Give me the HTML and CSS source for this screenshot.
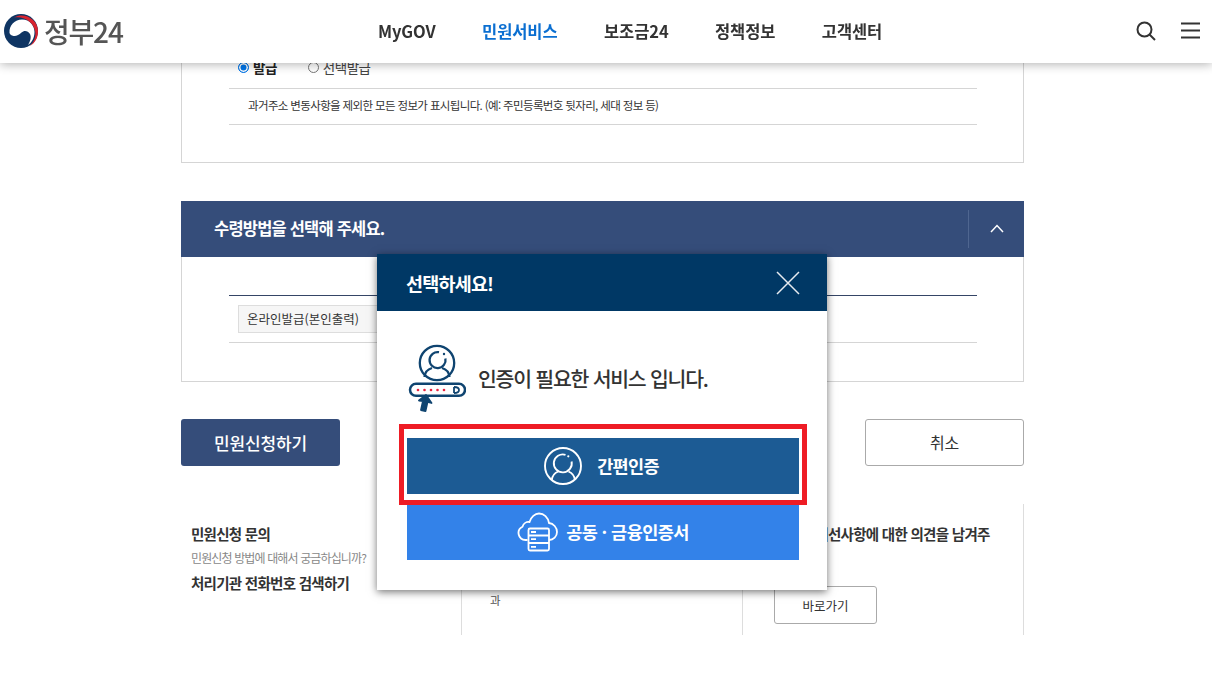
FILE: index.html
```html
<!DOCTYPE html>
<html lang="ko">
<head>
<meta charset="utf-8">
<title>정부24</title>
<link rel="stylesheet" href="styles.css">
</head>
<body>
<header class="site-header">
  <a class="logo">
    <svg class="logo-mark" width="36" height="36" viewBox="0 0 36 36">
      <circle cx="18" cy="18" r="17" fill="#0f3563"/>
      <path d="M6.500 20C6 12 12 6.500 19 6.500C27 6.500 31.500 13 31.500 19C31.500 25 28.500 30 25 32C27.500 28 28.500 24 27 21C25 17.500 21 17 18.500 19.500C16 22 13 23.500 10.500 23C8.500 22.500 7 21.500 6.500 20Z" fill="#fff"/>
      <path d="M11 4.500C20 -1 35 5 35 18.500C35 25 32 30 27 33C31 29 33 24 32.300 19C31.500 10 21.500 2.500 11 4.500Z" fill="#d8232f"/>
    </svg>
    <span class="logo-text">정부24</span>
  </a>
  <nav class="main-nav">
    <a>MyGOV</a>
    <a class="is-active">민원서비스</a>
    <a>보조금24</a>
    <a>정책정보</a>
    <a>고객센터</a>
  </nav>
  <div class="header-tools">
    <svg width="20" height="20" viewBox="0 0 20 20" fill="none" stroke="#333" stroke-width="2">
      <circle cx="8.500" cy="8.500" r="7"/>
      <path d="M13.500 13.500l5.500 5.500"/>
    </svg>
    <svg width="19" height="17" viewBox="0 0 19 17" fill="none" stroke="#333" stroke-width="2">
      <path d="M0 1.500h19M0 8.500h19M0 15.500h19"/>
    </svg>
  </div>
</header>

<main class="page">
  <section class="panel panel-top">
    <div class="inner">
      <div class="radio-row">
        <label class="radio-item is-on"><span class="radio"></span>발급</label>
        <label class="radio-item"><span class="radio"></span>선택발급</label>
      </div>
      <p class="note">과거주소 변동사항을 제외한 모든 정보가 표시됩니다. (예: 주민등록번호 뒷자리, 세대 정보 등)</p>
    </div>
  </section>

  <section class="accordion">
    <div class="accordion-head">
      <h2>수령방법을 선택해 주세요.</h2>
      <span class="accordion-toggle">
        <svg width="14" height="9" viewBox="0 0 14 9" fill="none" stroke="#fff" stroke-width="1.500"><path d="M1 8l6-6.500L13 8"/></svg>
      </span>
    </div>
    <div class="panel panel-body">
      <div class="inner">
        <div class="method-row">
          <span class="method-label">온라인발급(본인출력)</span>
        </div>
      </div>
    </div>
  </section>

  <div class="actions">
    <a class="btn btn-primary">민원신청하기</a>
    <a class="btn btn-outline">취소</a>
  </div>

  <section class="info">
    <div class="info-col">
      <h3>민원신청 문의</h3>
      <p class="info-sub">민원신청 방법에 대해서 궁금하십니까?</p>
      <h3 class="info-link">처리기관 전화번호 검색하기</h3>
    </div>
    <div class="info-col info-middle">
      <span class="info-small">과</span>
    </div>
    <div class="info-col info-right">
      <h3>서비스 개선사항에 대한 의견을 남겨주세요.</h3>
      <a class="btn-small">바로가기</a>
    </div>
  </section>
</main>

<div class="modal" role="dialog">
  <div class="modal-head">
    <h2>선택하세요!</h2>
    <svg class="modal-close" width="24" height="24" viewBox="0 0 24 24" fill="none" stroke="#e6ebf0" stroke-width="1.500"><path d="M1 1l22 22M23 1L1 23"/></svg>
  </div>
  <div class="modal-body">
    <div class="modal-msg">
      <svg width="58" height="68" viewBox="0 0 58 68" fill="none" stroke="#0f4470" stroke-width="2.300">
        <circle cx="29" cy="19" r="17.200"/>
        <path d="M31 8.200A8 8 0 1 0 37.400 14.500"/>
        <path d="M16.500 33c.5-5 4-8 7.500-9M41.500 33c-.5-5-4-8-7.500-9"/>
        <circle cx="36" cy="10" r="1.200" fill="#0f4470" stroke="none"/>
        <rect x="2" y="39.800" width="55" height="12" rx="6" stroke-width="2.500"/>
        <path d="M46 43v6M46 43c3.500 0 5 1.500 5 3s-1.500 3-5 3" stroke-width="1.800"/>
        <g fill="#e8233f" stroke="none">
          <circle cx="10" cy="46" r="1.300"/><circle cx="16.500" cy="46" r="1.300"/><circle cx="23" cy="46" r="1.300"/><circle cx="29.500" cy="46" r="1.300"/><circle cx="36" cy="46" r="1.300"/>
        </g>
        <path d="M18 51l-7 5.500 4 .5-2 9 4.500 1 2-9 4 1z" fill="#0f4470" stroke-width="1.800" stroke-linejoin="round"/>
      </svg>
      <p>인증이 필요한 서비스 입니다.</p>
    </div>
    <div class="modal-options">
      <a class="opt opt-simple">
        <svg width="38" height="38" viewBox="0 0 38 38" fill="none" stroke="#fff" stroke-width="1.900">
          <circle cx="19" cy="19" r="18"/>
          <path d="M21.500 7.800A9 9 0 1 0 27.600 14.500"/>
          <path d="M7.700 33c.5-4 3-7 6.500-8.500M31 33c-.5-4-3-7-6.500-8.500"/>
          <circle cx="24.300" cy="9.300" r="1.100" fill="#fff" stroke="none"/>
        </svg>
        <span>간편인증</span>
      </a>
      <a class="opt opt-cert">
        <svg width="42" height="40" viewBox="0 0 42 40" fill="none" stroke="#fff" stroke-width="1.800">
          <path d="M10.500 28H8.500a7 7 0 0 1-3-13.300C6.500 11.500 9.500 9.500 12.500 10 14 5 18 1.500 22 1.500c5 0 9 4 10 9.500 4.500 .5 8 4.500 8 9s-3.500 8-8 8"/>
          <rect x="11.500" y="16.500" width="20.500" height="22" rx="1.500" fill="#3382e9"/>
          <path d="M11.500 23.500h20.500M11.500 31h20.500M14 20h5M14 27.200h5M14 34.800h5"/>
        </svg>
        <span>공동 · 금융인증서</span>
      </a>
      <span class="highlight"></span>
    </div>
  </div>
</div>
</body>
</html>
```
FILE: styles.css
```css
* { box-sizing: border-box; }
html, body { margin: 0; padding: 0; height: 100%; overflow: hidden; background: #fff; }
body {
  font-family: "Noto Sans CJK KR", "Noto Sans", sans-serif;
  color: #333;
  position: relative;
}
h2, h3, p { margin: 0; }

.site-header {
  position: fixed;
  top: 0; left: 0; right: 0;
  height: 63px;
  background: #fff;
  box-shadow: 0 1px 10px rgba(0,0,0,.32);
  z-index: 5;
  display: flex;
  align-items: center;
  justify-content: space-between;
  padding: 0 12px 2px 3px;
}
.logo { display: flex; align-items: center; gap: 5px; }
.logo-text { font-size: 28px; font-weight: 500; letter-spacing: -1.200px; color: #555; line-height: 1; }
.main-nav {
  position: absolute;
  left: 378px; top: 0; height: 62px;
  display: flex; align-items: center; gap: 46.500px;
  font-size: 16.500px; font-weight: 700; letter-spacing: -.1px; color: #333;
}
.main-nav .is-active { color: #0b6fd1; }
.header-tools { display: flex; align-items: center; gap: 25px; }

.page { margin-left: 181px; width: 843px; padding-top: 56px; }
.panel { border: 1px solid #d5d5d5; border-top: 0; }
.inner { margin: 0 46px 0 47px; }
.panel-top { padding-bottom: 37px; }
.radio-row {
  height: 33px; padding: 0 0 10px 9px; border-bottom: 1px solid #d5d5d5;
  display: flex; align-items: center; gap: 31px; font-size: 13.500px; letter-spacing: -.5px; color: #444;
}
.radio-item { display: flex; align-items: center; gap: 4px; }
.radio-item.is-on { font-weight: 700; color: #222; }
.radio {
  width: 11px; height: 11px; border-radius: 50%; border: 1px solid #777; background: #fff;
}
.is-on .radio { border-color: #0075e8; background: #0075e8; box-shadow: inset 0 0 0 1.500px #fff; }
.note {
  height: 36px; line-height: 33px; padding-left: 19px; border-bottom: 1px solid #d5d5d5;
  font-size: 11.500px; letter-spacing: -.64px; color: #333; white-space: nowrap;
}

.accordion { margin-top: 38px; }
.accordion-head {
  height: 56px; background: #354d7a; display: flex; align-items: center; justify-content: space-between;
  padding: 0 0 2px 33px; color: #fff;
}
.accordion-head h2 { font-size: 16.500px; font-weight: 700; letter-spacing: -.8px; }
.accordion-toggle {
  width: 56px; height: 38px; border-left: 1px solid #4f6690; margin-top: 2px; padding-bottom: 2px;
  display: flex; align-items: center; justify-content: center;
}
.panel-body { padding: 38px 0 38px; }
.method-row { border-top: 1px solid #354566; border-bottom: 1px solid #d5d5d5; height: 48px; padding: 9px 0 0 9px; }
.method-label {
  display: block; width: 200px; height: 28px; line-height: 26px; padding-left: 8px;
  background: #f6f6f6; border: 1px solid #ddd; font-size: 12.500px; color: #333;
}

.actions { display: flex; justify-content: space-between; margin-top: 37px; }
.btn {
  width: 159px; height: 47px; border-radius: 3px; display: flex; align-items: center; justify-content: center;
  font-size: 16px; letter-spacing: -.2px; padding-bottom: 1px;
}
.btn-primary { background: #354d7a; color: #fff; font-size: 17px; font-weight: 500; letter-spacing: -.1px; }
.btn-outline { border: 1px solid #aaa; color: #333; }

.info { display: flex; margin-top: 38px; height: 131px; }
.info-col { width: 281px; border-right: 1px solid #ddd; padding: 19px 0 0 10px; }
.info-col h3 { font-size: 14.500px; font-weight: 700; letter-spacing: -.72px; color: #333; line-height: 22px; }
.info-sub { font-size: 12px; letter-spacing: -.87px; color: #888; line-height: 18px; margin-top: 4px; }
.info-link { margin-top: 5px; }
.info-middle { padding: 82px 0 0 28px; }
.info-small { font-size: 11.500px; color: #555; }
.info-right { padding: 19px 30px 0 31px; }
.info-right h3 { letter-spacing: -.7px; height: 63px; }
.btn-small {
  display: flex; align-items: center; justify-content: center; width: 103px; height: 38px;
  border: 1px solid #aaa; border-radius: 3px; font-size: 12.500px; color: #333;
}

.modal {
  position: absolute; left: 377px; top: 254px; width: 450px; height: 336px;
  background: #fff; box-shadow: 0 2px 8px rgba(0,0,0,.55); z-index: 10;
}
.modal-head {
  height: 57px; background: #003865; color: #fff;
  display: flex; align-items: center; justify-content: space-between; padding: 0 27px 0 29px;
}
.modal-head h2 { font-size: 18.500px; font-weight: 700; letter-spacing: -.8px; }
.modal-body { padding: 33px 28px 0 30px; }
.modal-msg { display: flex; align-items: center; gap: 12px; height: 68px; margin-left: 1px; }
.modal-msg p { font-size: 20.500px; font-weight: 500; letter-spacing: -1.250px; color: #333; margin-top: -1px; }
.modal-options { position: relative; margin-top: 26px; display: flex; flex-direction: column; gap: 10px; }
.opt {
  height: 56px; display: flex; align-items: center; justify-content: center; color: #fff;
  font-size: 17.500px; font-weight: 700; letter-spacing: -.7px;
}
.opt span { margin-bottom: 2px; }
.opt-simple { background: #1c5b94; gap: 15px; padding-right: 3px; }
.opt-cert { background: #3382e9; gap: 7px; letter-spacing: -.55px; }
.highlight {
  position: absolute; left: -8px; top: -14px; width: 408px; height: 81px;
  border: 5px solid #ee1c25; pointer-events: none;
}
```
